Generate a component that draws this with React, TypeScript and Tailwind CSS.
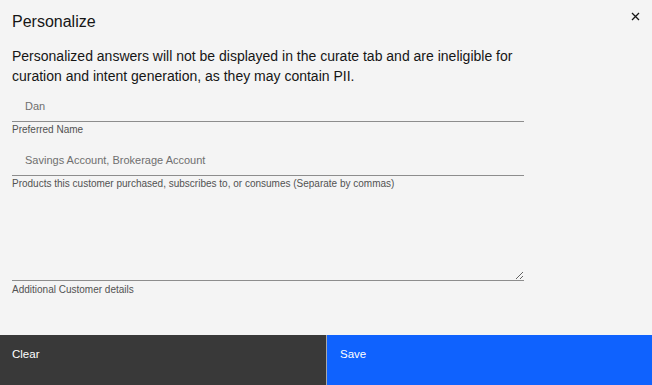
import React from "react";

const Field: React.FC<{ value: string; label: string; className?: string }> = ({ value, label, className }) => (
    <div className={className}>
        <input
            readOnly
            value={value}
            className="block w-full h-[33px] bg-transparent border-b border-[#8d8d8d] pl-[13px] pt-[1px] text-[11px] text-[#6f6f6f] outline-none"
        />
        <div className="mt-[2px] text-[10px] leading-[12px] text-[#525252]">{label}</div>
    </div>
);

export default function App() {
    return (
        <div className="w-[652px] h-[385px] bg-[#f4f4f4] flex flex-col font-['Liberation_Sans',Arial,sans-serif] text-[#161616] overflow-hidden">
            <div className="flex items-start justify-between pl-3 pr-3 pt-3">
                <h2 className="text-[16px] leading-[20px]">Personalize</h2>
                <button className="w-[9px] h-[9px] text-[#161616]" aria-label="Close">
                    <svg viewBox="0 0 9 9" width="9" height="9">
                        <path d="M1 1 L8 8 M8 1 L1 8" stroke="currentColor" strokeWidth="1.3" />
                    </svg>
                </button>
            </div>
            <div className="px-3 w-[536px]">
                <p className="mt-[14px] text-[14px] leading-[20px]">
                    Personalized answers will not be displayed in the curate tab and are ineligible for curation and intent generation, as they may contain PII.
                </p>
                <Field className="mt-[3px]" value="Dan" label="Preferred Name" />
                <Field className="mt-[7px]" value="Savings Account, Brokerage Account" label="Products this customer purchased, subscribes to, or consumes (Separate by commas)" />
                <div className="mt-[3px]">
                    <textarea
                        readOnly
                        className="block w-full h-[88px] bg-transparent border-b border-[#8d8d8d] outline-none"
                    />
                    <div className="mt-[3px] text-[10px] leading-[12px] text-[#525252]">Additional Customer details</div>
                </div>
            </div>
            <div className="mt-auto flex h-[50px] text-[11.5px] text-white">
                <button className="w-[327px] bg-[#393939] text-left pl-3 pt-[11px] flex items-start border-r border-[#a8a8a8]">
                    Clear
                </button>
                <button className="flex-1 bg-[#0f62fe] text-left pl-[13px] pt-[11px] flex items-start">
                    Save
                </button>
            </div>
        </div>
    );
}
